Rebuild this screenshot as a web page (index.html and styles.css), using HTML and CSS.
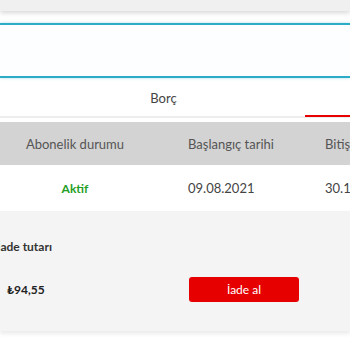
FILE: index.html
```html
<!DOCTYPE html>
<html lang="tr">
<head>
<meta charset="utf-8">
<link rel="stylesheet" href="styles.css">
</head>
<body>
<div class="topbar"></div>
<div class="search"></div>
<div class="tabs">
  <div class="tab">Borç</div>
  <div class="tab active"></div>
</div>
<div class="table">
  <div class="row head">
    <div class="cell c1">Abonelik durumu</div>
    <div class="cell c2">Başlangıç tarihi</div>
    <div class="cell c3">Bitiş tarihi</div>
  </div>
  <div class="row body">
    <div class="cell c1 status">Aktif</div>
    <div class="cell c2">09.08.2021</div>
    <div class="cell c3">30.12.2021</div>
  </div>
</div>
<div class="panel">
  <div class="label">İade tutarı</div>
  <div class="line">
    <div class="amount">₺94,55</div>
    <button class="btn">İade al</button>
  </div>
</div>
</body>
</html>
```
FILE: styles.css
```css
html, body {
  margin: 0;
  padding: 0;
  background: #ffffff;
  width: 350px;
  height: 350px;
  overflow: hidden;
  font-family: Lato, "Open Sans", sans-serif;
  color: #555555;
}
.topbar {
  height: 11px;
  background: #f0f0f0;
  box-shadow: 0 2px 5px rgba(0, 0, 0, 0.16);
  position: relative;
}
.search {
  margin-top: 12px;
  height: 51px;
  border-top: 2px solid #2cacc6;
  border-bottom: 2px solid #2cacc6;
  box-shadow: 0 0 3px rgba(44, 172, 198, 0.35);
  background: #fcfeff;
}
.tabs {
  display: grid;
  grid-template-columns: 305px 1fr;
  height: 38px;
  border-bottom: 2px solid #ededed;
}
.tab {
  display: flex;
  justify-content: center;
  align-items: center;
  padding-left: 22px;
  font-size: 13px;
  color: #444444;
  padding-top: 1px;
}
.tab.active {
  padding: 0;
  border-bottom: 2px solid #e60000;
  margin-bottom: -1px;
}
.table {
  margin-top: 4px;
}
.row {
  display: grid;
  grid-template-columns: 150px 175px 1fr;
  align-items: center;
  font-size: 13px;
  white-space: nowrap;
}
.row.head {
  height: 43px;
  background: #d3d3d3;
  color: #555555;
}
.row.body {
  height: 46px;
  background: #ffffff;
  color: #444444;
}
.c1 {
  text-align: center;
}
.c2 {
  padding-left: 38px;
}
.c3 {
  padding-left: 0;
}
.status {
  color: #1f9e1f;
  font-weight: 700;
  font-size: 12px;
}
.panel {
  height: 120px;
  background: #f4f4f4;
  box-shadow: 0 3px 4px rgba(0, 0, 0, 0.08);
  padding-top: 29px;
  box-sizing: border-box;
}
.label {
  margin-left: -3px;
  font-size: 12px;
  font-weight: 700;
  color: #333333;
  height: 14px;
  line-height: 14px;
}
.line {
  display: flex;
  align-items: center;
  margin-top: 23px;
}
.amount {
  width: 189px;
  padding-left: 7px;
  box-sizing: border-box;
  font-size: 12px;
  font-weight: 700;
  color: #222222;
}
.btn {
  width: 110px;
  height: 25px;
  border: none;
  border-radius: 3px;
  background: #e60000;
  color: #ffffff;
  font-family: Lato, "Open Sans", sans-serif;
  font-size: 12px;
  padding: 0;
}
```
